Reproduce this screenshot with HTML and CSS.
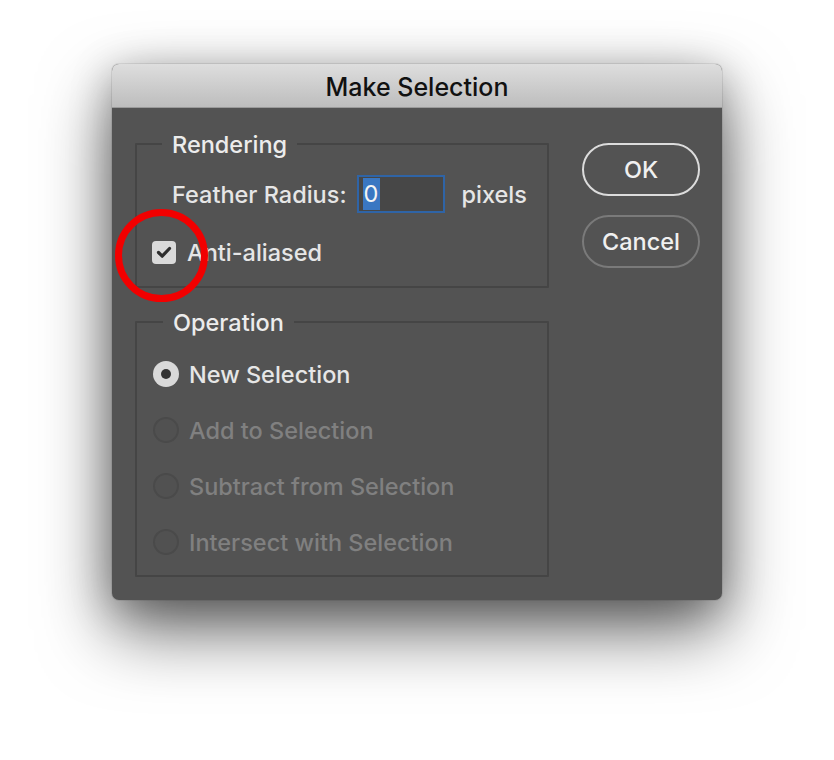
FILE: index.html
```html
<!DOCTYPE html>
<html lang="en">
<head>
<meta charset="utf-8">
<title>Make Selection</title>
<link rel="stylesheet" href="styles.css">
</head>
<body>
<div class="stage">
  <div class="dialog">
    <div class="titlebar">Make Selection</div>
    <div class="content">
      <div class="groups">
        <fieldset class="group rendering">
          <legend>Rendering</legend>
          <div class="row feather">
            <span class="label">Feather Radius:</span>
            <span class="field"><span class="sel">0</span></span>
            <span class="label unit">pixels</span>
          </div>
          <div class="row check">
            <span class="checkbox">
              <svg width="24" height="23" viewBox="0 0 24 23"><path d="M6.5 11.5 L10.2 15.2 L17.5 7.5" fill="none" stroke="#2e2e2e" stroke-width="3.2" stroke-linecap="round" stroke-linejoin="round"/></svg>
            </span>
            <span class="label">Anti-aliased</span>
          </div>
        </fieldset>
        <fieldset class="group operation">
          <legend>Operation</legend>
          <div class="row radio-row"><span class="radio on"><span class="dot"></span></span><span class="label">New Selection</span></div>
          <div class="row radio-row disabled"><span class="radio"></span><span class="label">Add to Selection</span></div>
          <div class="row radio-row disabled"><span class="radio"></span><span class="label">Subtract from Selection</span></div>
          <div class="row radio-row disabled"><span class="radio"></span><span class="label">Intersect with Selection</span></div>
        </fieldset>
      </div>
      <div class="buttons">
        <div class="btn primary">OK</div>
        <div class="btn">Cancel</div>
      </div>
    </div>
    <div class="annotation"></div>
  </div>
</div>
</body>
</html>
```
FILE: styles.css
```css
html, body {
  margin: 0;
  padding: 0;
  background: #ffffff;
}
body {
  font-family: Inter, "Liberation Sans", Arial, sans-serif;
  font-weight: 500;
  width: 834px;
  height: 760px;
  overflow: hidden;
}
.stage {
  padding: 64px 0 0 112px;
}
.dialog {
  position: relative;
  width: 610px;
  background: #535353;
  border-radius: 7px;
  box-shadow: 0 30px 70px rgba(0, 0, 0, 0.6), 0 8px 40px rgba(0, 0, 0, 0.25), 0 0 0 1px rgba(0, 0, 0, 0.08);
}
.titlebar {
  height: 44px;
  box-sizing: border-box;
  border-radius: 7px 7px 0 0;
  background: linear-gradient(#dedede, #bdbdbd);
  border-bottom: 1px solid #9a9a9a;
  color: #111;
  font-size: 25px;
  font-weight: 500;
  line-height: 44px;
  text-align: center;
  padding-top: 1px;
}
.content {
  display: flex;
  padding: 22px 22px 23px 23px;
}
.groups {
  width: 414px;
  display: flex;
  flex-direction: column;
  gap: 20px;
}
.group {
  margin: 0;
  min-width: 0;
  border: 2px solid #454545;
  border-radius: 1px;
  padding: 0 20px 20px 15px;
}
.group legend {
  margin-left: 10px;
  padding: 2px 10px 0;
  font-size: 23.5px;
  line-height: 26px;
  color: #ececec;
}
.row {
  display: flex;
  align-items: center;
}
.label {
  font-size: 23.5px;
  line-height: 27px;
  padding-top: 1px;
  color: #e6e6e6;
  white-space: nowrap;
}
.rendering {
  padding-top: 17px;
}
.feather {
  margin-left: 20px;
  height: 38px;
}
.field {
  margin-left: 10px;
  width: 88px;
  height: 38px;
  box-sizing: border-box;
  border: 2px solid #2f64a6;
  background: #474747;
  display: flex;
  align-items: center;
  padding-left: 4px;
}
.sel {
  background: #3a77c2;
  color: #f4f4f4;
  font-size: 23.5px;
  line-height: 32px;
  height: 32px;
  width: 17px;
  text-align: center;
  font-weight: 400;
}
.unit {
  margin-left: 17px;
}
.check {
  margin-top: 25px;
  height: 28px;
}
.checkbox {
  width: 24px;
  height: 23px;
  border-radius: 4px;
  background: #dadada;
  margin-right: 11px;
  display: flex;
}
.operation {
  padding-top: 24px;
  padding-bottom: 19px;
  padding-left: 16px;
  display: flex;
  flex-direction: column;
  gap: 28px;
}
.radio-row {
  height: 28px;
}
.radio {
  width: 26px;
  height: 26px;
  box-sizing: border-box;
  border-radius: 50%;
  border: 2px solid #4a4a4a;
  background: #515151;
  margin-right: 10px;
  display: flex;
  align-items: center;
  justify-content: center;
}
.radio.on {
  border: none;
  background: #d9d9d9;
}
.dot {
  width: 10px;
  height: 10px;
  border-radius: 50%;
  background: #333;
}
.disabled .label {
  color: #808080;
}
.buttons {
  margin-left: 33px;
  margin-top: 13px;
  display: flex;
  flex-direction: column;
  gap: 19px;
}
.btn {
  width: 118px;
  height: 53px;
  box-sizing: border-box;
  border-radius: 27px;
  border: 2px solid #7a7a7a;
  color: #f0f0f0;
  font-size: 23.5px;
  line-height: 49px;
  text-align: center;
}
.btn.primary {
  border-color: #dcdcdc;
}
.annotation {
  position: absolute;
  left: 3px;
  top: 145px;
  width: 93px;
  height: 93px;
  box-sizing: border-box;
  border: 7px solid #f20000;
  border-radius: 50%;
  pointer-events: none;
}
```
